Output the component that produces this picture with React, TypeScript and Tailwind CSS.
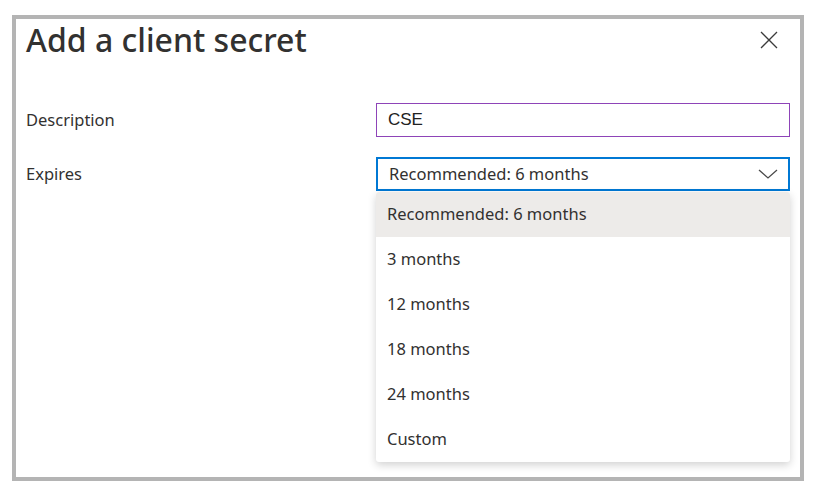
const options = ["Recommended: 6 months", "3 months", "12 months", "18 months", "24 months", "Custom"];

export default function App() {
  return (
    <div className="h-[491px] w-[816px] bg-white pl-[12px] pt-[15px] font-['Noto_Sans',sans-serif] text-[#323130]">
      <div className="flex h-[466px] w-[792px] flex-col border-[4px] border-[#b4b4b4] bg-white">
        <div className="flex items-start justify-between pl-[10px] pr-[22px]">
          <h1 className="text-[32px] font-medium leading-[42px]">Add a client secret</h1>
          <svg className="mt-[12px]" width="18" height="18" viewBox="0 0 18 18" fill="none" stroke="#3b3b3b" strokeWidth="1.3">
            <path d="M1 1 L17 17 M17 1 L1 17" />
          </svg>
        </div>

        <div className="mt-[42px] flex items-center pl-[10px] pr-[10px]">
          <span className="w-[350px] text-[16.5px]">Description</span>
          <div className="flex h-[34px] flex-1 items-center border border-[#8e44b8] px-[11px] font-['Liberation_Sans',sans-serif] text-[17px] text-[#222]">
            CSE
          </div>
        </div>

        <div className="mt-[20px] flex items-start pl-[10px] pr-[10px]">
          <span className="mt-[5px] w-[350px] text-[16.5px]">Expires</span>
          <div className="relative flex-1">
            <div className="flex h-[34px] items-center justify-between border-2 border-[#0078d4] pl-[11px] pr-[10px] text-[16.5px]">
              <span>Recommended: 6 months</span>
              <svg width="20" height="10" viewBox="0 0 20 10" fill="none" stroke="#4a4a4a" strokeWidth="1.3">
                <path d="M1 1 L10 9 L19 1" />
              </svg>
            </div>
            <ul className="absolute left-0 right-0 top-[35px] overflow-hidden rounded-[3px] bg-white shadow-[0_3px_8px_rgba(0,0,0,0.18)]">
              {options.map((o, i) => (
                <li
                  key={o}
                  className={`flex h-[45px] items-center px-[11px] text-[16.5px] ${i === 0 ? "bg-[#edebe9]" : ""}`}
                >
                  {o}
                </li>
              ))}
            </ul>
          </div>
        </div>
      </div>
    </div>
  );
}
